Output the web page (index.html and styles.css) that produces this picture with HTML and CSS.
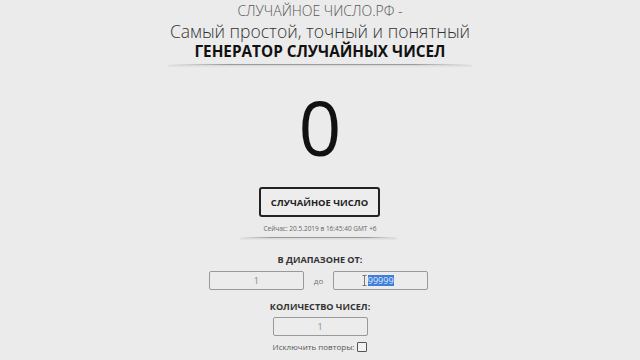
FILE: index.html
```html
<!DOCTYPE html>
<html lang="ru">
<head>
    <meta charset="UTF-8">
    <meta name="viewport" content="width=device-width, initial-scale=1.0">
    <title>Случайное число.рф</title>
    <link rel="stylesheet" href="styles.css">
</head>
<body>
    <div class="page">
        <div class="header">
            <div class="site-name">СЛУЧАЙНОЕ ЧИСЛО.РФ -</div>
            <div class="tagline">Самый простой, точный и понятный</div>
            <h1>ГЕНЕРАТОР СЛУЧАЙНЫХ ЧИСЕЛ</h1>
        </div>
        <div class="line wide"></div>

        <div class="number">0</div>

        <button class="gen-btn">СЛУЧАЙНОЕ ЧИСЛО</button>
        <div class="now">Сейчас: 20.5.2019 в 16:45:40 GMT +6</div>
        <div class="line short"></div>

        <div class="label">В ДИАПАЗОНЕ ОТ:</div>
        <div class="range">
            <div class="field">1</div>
            <span class="to">до</span>
            <div class="field">
                <svg class="cursor" width="5" height="11" viewBox="0 0 5 11">
                    <path d="M0.5 0.5h4M2.5 0.5v10M0.5 10.5h4" stroke="#777" stroke-width="1" fill="none"/>
                </svg><span class="selected">99999</span>
            </div>
        </div>

        <div class="label second">КОЛИЧЕСТВО ЧИСЕЛ:</div>
        <div class="field">1</div>

        <label class="repeat">Исключить повторы: <span class="check"></span></label>
    </div>
</body>
</html>
```

FILE: styles.css
```css
body {
    margin: 0;
    background-color: #ebebeb;
    font-family: "Open Sans", Arial, sans-serif;
    color: #222;
}
.page {
    display: flex;
    flex-direction: column;
    align-items: center;
    text-align: center;
}
.header {
    padding-top: 1px;
}
.site-name {
    font-size: 14px;
    font-weight: 300;
    color: #555;
    line-height: 20px;
}
.tagline {
    font-size: 17.5px;
    font-weight: 300;
    color: #333;
    line-height: 20px;
}
h1 {
    margin: 0;
    font-size: 15.3px;
    font-weight: 700;
    color: #111;
    line-height: 21px;
}
.line {
    height: 1px;
    background: linear-gradient(to right, rgba(0,0,0,0), rgba(0,0,0,0.35) 20%, rgba(0,0,0,0.35) 80%, rgba(0,0,0,0));
    box-shadow: 0 1px 2px rgba(0,0,0,0.15);
}
.line.wide {
    width: 304px;
    margin-top: 2px;
}
.line.short {
    width: 157px;
    margin-top: 3px;
    margin-right: 3px;
}
.number {
    font-size: 75px;
    line-height: 80px;
    color: #111;
    margin-top: 22px;
}
.gen-btn {
    margin-top: 20px;
    margin-right: 1px;
    width: 121px;
    height: 30px;
    background: #ededed;
    border: 2px solid #222;
    border-radius: 3px;
    font-family: "Open Sans", Arial, sans-serif;
    font-size: 9.4px;
    font-weight: 700;
    color: #222;
    padding: 0;
}
.now {
    font-size: 6.5px;
    color: #666;
    margin-top: 7px;
    line-height: 10px;
}
.label {
    font-size: 9.1px;
    font-weight: 700;
    color: #333;
    margin-top: 16px;
    line-height: 12px;
}
.label.second {
    margin-top: 11px;
}
.range {
    display: flex;
    align-items: center;
    gap: 10px;
    margin-top: 5px;
    margin-right: 3px;
}
.to {
    font-size: 8px;
    color: #777;
}
.field {
    position: relative;
    width: 93px;
    height: 17px;
    border: 1px solid #999;
    border-radius: 2px;
    background: #ececec;
    font-size: 9px;
    line-height: 17px;
    color: #888;
    display: flex;
    align-items: center;
    justify-content: center;
    margin-top: 4px;
}
.range .field {
    margin-top: 0;
}
.cursor {
    position: absolute;
    left: 28px;
    top: 3px;
}
.selected {
    background: #3f7fdb;
    color: #dde8f8;
    line-height: 11px;
}
.repeat {
    font-size: 8px;
    color: #555;
    margin-top: 5px;
    display: flex;
    align-items: center;
    gap: 3px;
}
.check {
    width: 8px;
    height: 8px;
    border: 1px solid #555;
    border-radius: 1px;
    background: #f2f2f2;
}
```
